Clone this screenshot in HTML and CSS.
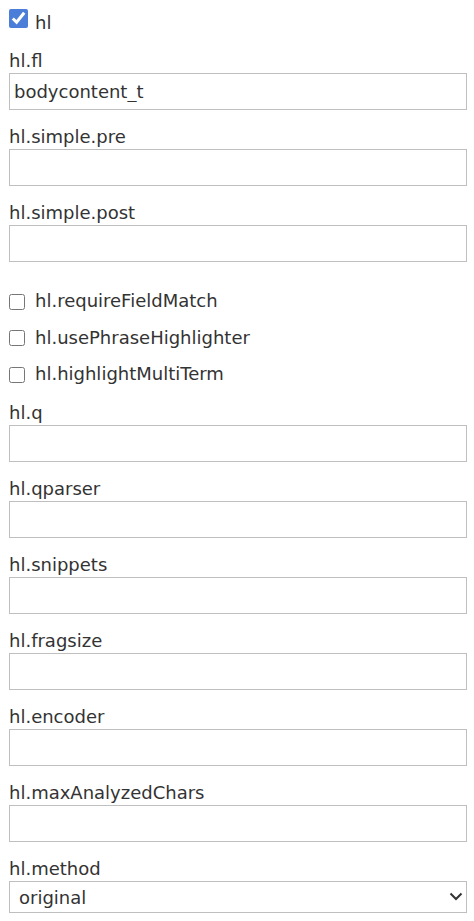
FILE: index.html
```html
<!DOCTYPE html>
<html>
<head>
<meta charset="utf-8">
<link rel="stylesheet" href="styles.css">
</head>
<body>
<form class="form">
  <label class="check check-main"><input type="checkbox" class="box box-big" checked><span>hl</span></label>

  <div class="field">
    <label class="lbl">hl.fl</label>
    <input class="txt" type="text" value="bodycontent_t">
  </div>
  <div class="field">
    <label class="lbl">hl.simple.pre</label>
    <input class="txt" type="text">
  </div>
  <div class="field field-last">
    <label class="lbl">hl.simple.post</label>
    <input class="txt" type="text">
  </div>

  <div class="checks">
    <label class="check"><input type="checkbox" class="box"><span>hl.requireFieldMatch</span></label>
    <label class="check"><input type="checkbox" class="box"><span>hl.usePhraseHighlighter</span></label>
    <label class="check"><input type="checkbox" class="box"><span>hl.highlightMultiTerm</span></label>
  </div>

  <div class="field">
    <label class="lbl">hl.q</label>
    <input class="txt" type="text">
  </div>
  <div class="field">
    <label class="lbl">hl.qparser</label>
    <input class="txt" type="text">
  </div>
  <div class="field">
    <label class="lbl">hl.snippets</label>
    <input class="txt" type="text">
  </div>
  <div class="field">
    <label class="lbl">hl.fragsize</label>
    <input class="txt" type="text">
  </div>
  <div class="field">
    <label class="lbl">hl.encoder</label>
    <input class="txt" type="text">
  </div>
  <div class="field">
    <label class="lbl">hl.maxAnalyzedChars</label>
    <input class="txt" type="text">
  </div>
  <div class="field">
    <label class="lbl">hl.method</label>
    <div class="sel-wrap">
      <select class="sel">
        <option>original</option>
        <option>unified</option>
        <option>fastVector</option>
      </select>
      <svg class="chev" width="14" height="9" viewBox="0 0 14 9"><path d="M1.5 1.5 L7 7 L12.5 1.5" fill="none" stroke="#333" stroke-width="2"/></svg>
    </div>
  </div>
</form>
</body>
</html>
```
FILE: styles.css
```css
html, body {
  margin: 0;
  padding: 0;
  background: #fff;
}
body {
  font-family: "DejaVu Sans", Verdana, sans-serif;
  font-size: 18px;
  line-height: 21px;
  color: #333;
}
.form {
  display: flex;
  flex-direction: column;
  padding: 12px 7px 0 9px;
  width: 458px;
}
.check {
  display: flex;
  align-items: center;
  height: 21px;
}
.check-main {
  margin-bottom: 17px;
  align-items: flex-start;
}
.box {
  margin: 2px 10px 0 0;
  width: 16px;
  height: 16px;
  accent-color: #4a7ed8;
  flex: none;
}
.box-big {
  width: 19px;
  height: 19px;
  margin: -3px 7px 0 0;
}
.field {
  display: flex;
  flex-direction: column;
  margin-bottom: 16px;
}
.field-last {
  margin-bottom: 0;
}
.lbl {
  display: block;
  height: 21px;
  margin-bottom: 2px;
}
.txt {
  box-sizing: border-box;
  width: 458px;
  height: 37px;
  margin: 0;
  padding: 0 4px;
  border: 1px solid #bfbfbf;
  border-radius: 0;
  font-family: inherit;
  font-size: 18px;
  color: #333;
  background: #fff;
  outline: none;
}
.checks {
  display: flex;
  flex-direction: column;
  gap: 15.5px;
  margin: 28px 0 18px;
}
.sel-wrap {
  position: relative;
  width: 458px;
}
.sel {
  appearance: none;
  -webkit-appearance: none;
  box-sizing: border-box;
  width: 458px;
  height: 32px;
  margin: 0;
  padding: 0 30px 0 9px;
  border: 1px solid #bfbfbf;
  border-radius: 0;
  background: #fff;
  font-family: inherit;
  font-size: 18px;
  color: #333;
}
.chev {
  position: absolute;
  right: 4px;
  top: 11px;
  pointer-events: none;
}
```
